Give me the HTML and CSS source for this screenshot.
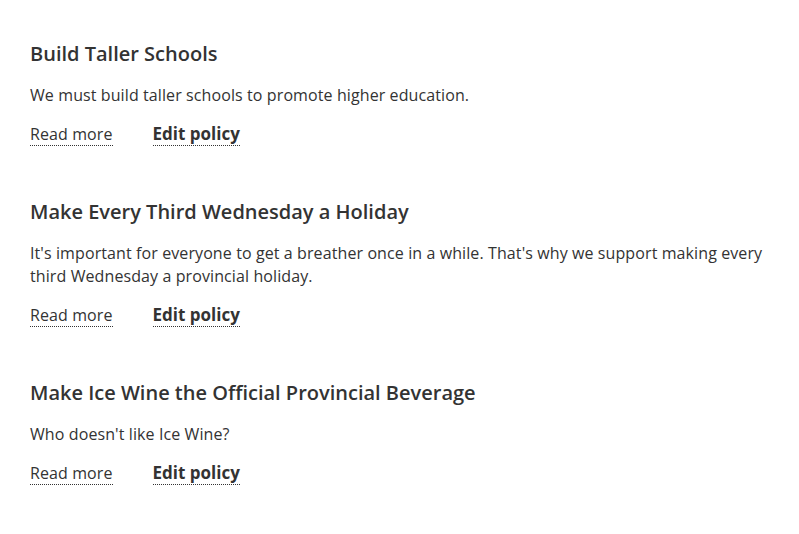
FILE: index.html
```html
<!DOCTYPE html>
<html lang="en">
<head>
  <meta charset="UTF-8">
  <meta name="viewport" content="width=device-width, initial-scale=1.0">
  <title>Policies</title>
  <link rel="stylesheet" href="styles.css">
</head>
<body>

<div class="policy-list">
  <div class="policy">
    <h2 class="policy-title">Build Taller Schools</h2>
    <p class="policy-summary">We must build taller schools to promote higher education.</p>
    <div class="policy-links">
      <a href="#" class="read-more">Read more</a>
      <a href="#" class="edit-link">Edit policy</a>
    </div>
  </div>

  <div class="policy">
    <h2 class="policy-title">Make Every Third Wednesday a Holiday</h2>
    <p class="policy-summary">It's important for everyone to get a breather once in a while. That's why we support making every third Wednesday a provincial holiday.</p>
    <div class="policy-links">
      <a href="#" class="read-more">Read more</a>
      <a href="#" class="edit-link">Edit policy</a>
    </div>
  </div>

  <div class="policy">
    <h2 class="policy-title">Make Ice Wine the Official Provincial Beverage</h2>
    <p class="policy-summary">Who doesn't like Ice Wine?</p>
    <div class="policy-links">
      <a href="#" class="read-more">Read more</a>
      <a href="#" class="edit-link">Edit policy</a>
    </div>
  </div>
</div>

</body>
</html>
```

FILE: styles.css
```css
body {
  margin: 0;
  font-family: 'Open Sans', sans-serif;
  color: #333;
  background-color: #fff;
}

.policy-list {
  padding: 42px 30px 0 30px;
}

.policy {
  margin-bottom: 54px;
}

.policy-title {
  margin: 0;
  font-size: 20px;
  font-weight: 600;
  line-height: 24px;
}

.policy-summary {
  margin: 18px 0 0 0;
  font-size: 16px;
  line-height: 23px;
  letter-spacing: 0.1px;
}

.policy-links {
  display: flex;
  align-items: flex-end;
  gap: 40px;
  margin-top: 16px;
  font-size: 16px;
  line-height: 22px;
}

.policy-links a {
  color: #333;
  text-decoration: none;
  border-bottom: 1px dotted #333;
  letter-spacing: 0.1px;
}

.policy-links .edit-link {
  font-size: 17px;
  font-weight: 700;
  letter-spacing: 0;
}
```
